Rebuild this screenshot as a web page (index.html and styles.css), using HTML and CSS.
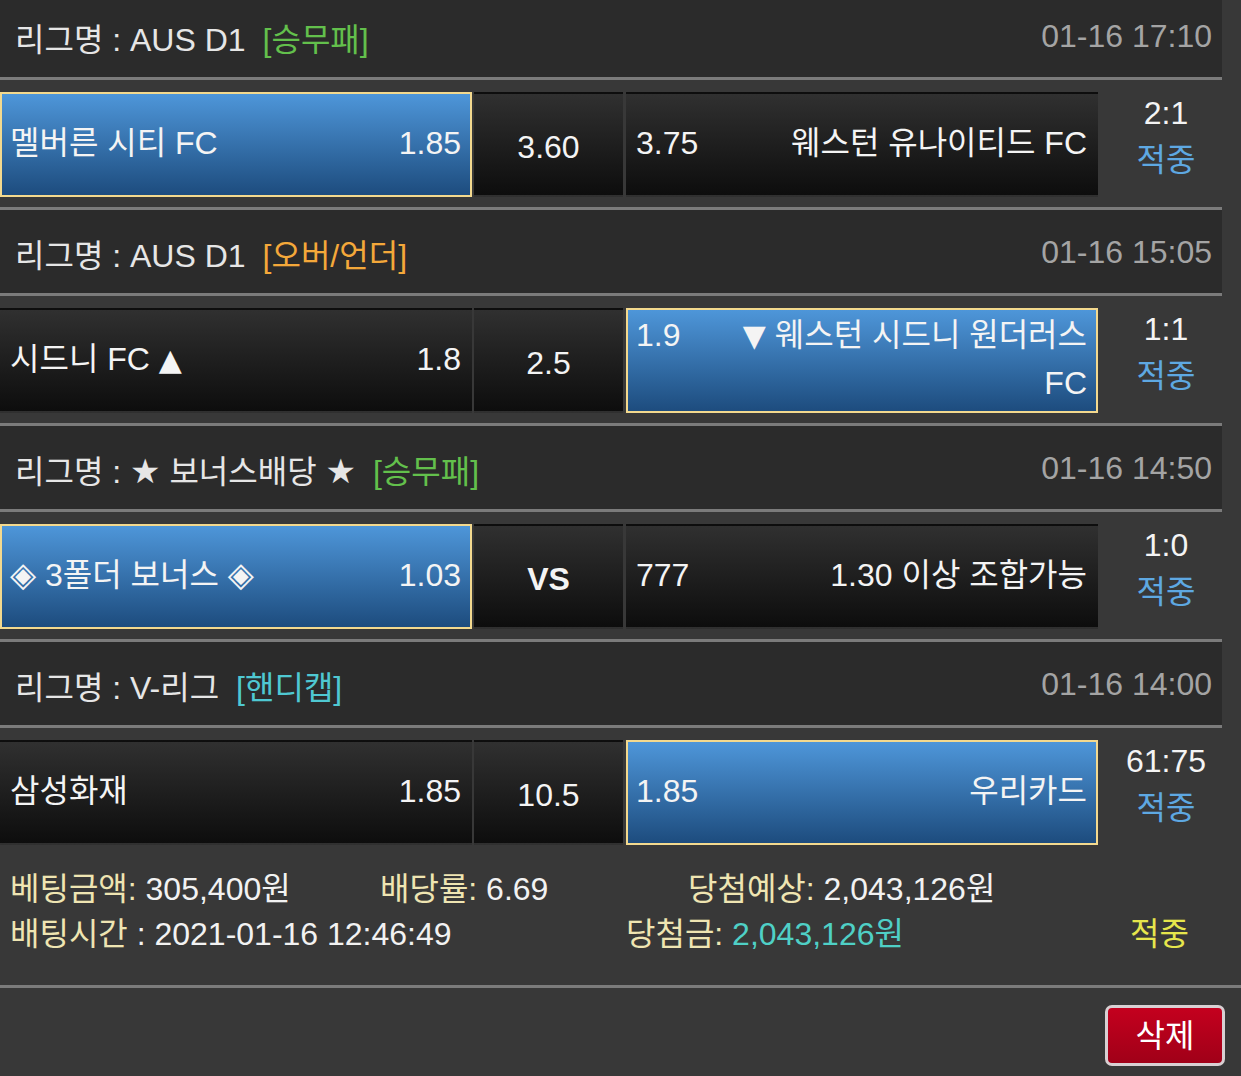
FILE: index.html
```html
<!DOCTYPE html>
<html lang="ko">
<head>
<meta charset="utf-8">
<title>베팅내역</title>
<link rel="stylesheet" href="styles.css">
</head>
<body>
<div class="slip">
  <div class="game">
    <div class="game-head">
      <span class="league">리그명 : AUS D1<span class="tag tag-win">[승무패]</span></span>
      <span class="time">01-16 17:10</span>
    </div>
    <div class="game-body">
      <div class="pick home sel"><span class="team">멜버른 시티 FC</span><span class="odd">1.85</span></div>
      <div class="pick draw">3.60</div>
      <div class="pick away"><div class="away-in"><span class="odd">3.75</span><span class="team">웨스턴 유나이티드 FC</span></div></div>
      <div class="result"><span class="score">2:1</span><span class="hit">적중</span></div>
    </div>
  </div>
  <div class="game">
    <div class="game-head">
      <span class="league">리그명 : AUS D1<span class="tag tag-ou">[오버/언더]</span></span>
      <span class="time">01-16 15:05</span>
    </div>
    <div class="game-body">
      <div class="pick home"><span class="team">시드니 FC <span class="sym tri">▲</span></span><span class="odd">1.8</span></div>
      <div class="pick draw">2.5</div>
      <div class="pick away sel"><div class="away-in"><span class="odd">1.9</span><span class="team"><span class="sym tri">▼</span> 웨스턴 시드니 원더러스 FC</span></div></div>
      <div class="result"><span class="score">1:1</span><span class="hit">적중</span></div>
    </div>
  </div>
  <div class="game">
    <div class="game-head">
      <span class="league">리그명 : <span class="sym">★</span> 보너스배당 <span class="sym">★</span><span class="tag tag-win">[승무패]</span></span>
      <span class="time">01-16 14:50</span>
    </div>
    <div class="game-body">
      <div class="pick home sel"><span class="team"><span class="sym">◈</span> 3폴더 보너스 <span class="sym">◈</span></span><span class="odd">1.03</span></div>
      <div class="pick draw vs">VS</div>
      <div class="pick away"><div class="away-in"><span class="odd">777</span><span class="team">1.30 이상 조합가능</span></div></div>
      <div class="result"><span class="score">1:0</span><span class="hit">적중</span></div>
    </div>
  </div>
  <div class="game">
    <div class="game-head">
      <span class="league">리그명 : V-리그<span class="tag tag-hc">[핸디캡]</span></span>
      <span class="time">01-16 14:00</span>
    </div>
    <div class="game-body">
      <div class="pick home"><span class="team">삼성화재</span><span class="odd">1.85</span></div>
      <div class="pick draw">10.5</div>
      <div class="pick away sel"><div class="away-in"><span class="odd">1.85</span><span class="team">우리카드</span></div></div>
      <div class="result"><span class="score">61:75</span><span class="hit">적중</span></div>
    </div>
  </div>
</div>
<div class="summary">
  <div class="sum-row">
    <span class="c1a"><span class="label">베팅금액:</span> 305,400원</span>
    <span class="c2a"><span class="label">배당률:</span> 6.69</span>
    <span><span class="label">당첨예상:</span> 2,043,126원</span>
  </div>
  <div class="sum-row">
    <span class="c1b"><span class="label">배팅시간</span> : 2021-01-16 12:46:49</span>
    <span class="c2b"><span class="label">당첨금:</span> <span class="win-amt">2,043,126원</span></span>
    <span class="hit-yellow">적중</span>
  </div>
</div>
<div class="actions">
  <button class="btn-del" type="button">삭제</button>
</div>
</body>
</html>
```
FILE: styles.css
```css
html, body {
  margin: 0;
  padding: 0;
}
body {
  background: #383838;
  font-family: "Liberation Sans", "Noto Sans CJK KR", sans-serif;
  font-size: 32px;
  color: #f2f2f2;
  overflow: hidden;
}
.sym {
  font-family: "DejaVu Sans", sans-serif;
  font-size: 34px;
  line-height: 1;
}
.sym.tri {
  font-size: 30px;
}
.slip {
  margin-top: -6px;
  width: 1222px;
}
.game-head {
  box-sizing: border-box;
  height: 86px;
  padding: 2px 10px 0 15px;
  background: #2b2b2b;
  border-bottom: 3px solid #7b7b7b;
  display: flex;
  align-items: center;
  justify-content: space-between;
}
.league {
  color: #e6e6e6;
}
.tag {
  margin-left: 17px;
}
.tag-win { color: #63c04c; }
.tag-ou { color: #f4a83a; }
.tag-hc { color: #4fc8d2; }
.time {
  color: #a4a4a4;
}
.game-body {
  display: flex;
  padding: 12px 0 10px;
  border-bottom: 3px solid #7b7b7b;
}
.game:last-child .game-body {
  border-bottom: none;
  padding-bottom: 0;
}
.pick {
  height: 105px;
  box-sizing: border-box;
  border: 2px solid transparent;
  background: linear-gradient(#303030, #0d0d0d);
  display: flex;
  align-items: center;
  padding: 0 9px 4px 8px;
  line-height: 48px;
  color: #f4f4f4;
}
.home {
  width: 472px;
  justify-content: space-between;
  margin-right: 2px;
}
.draw {
  width: 149px;
  justify-content: center;
  margin-right: 3px;
  padding: 4px 0 0;
}
.vs {
  font-weight: bold;
}
.away {
  width: 472px;
}
.away-in {
  width: 100%;
  display: flex;
  align-items: flex-start;
  justify-content: space-between;
}
.away-in .odd {
  flex: none;
  margin-right: 40px;
}
.away-in .team {
  text-align: right;
}
.sel {
  background: linear-gradient(#4e96d9, #1d4c7e);
  border-color: #f3d98e;
}
.result {
  width: 124px;
  box-sizing: border-box;
  padding-left: 12px;
  margin-top: -2px;
  display: flex;
  flex-direction: column;
  align-items: center;
  line-height: 47px;
}
.score {
  color: #f4f4f4;
}
.hit {
  color: #5ea8e2;
}
.summary {
  padding: 22px 0 28px 10px;
  border-bottom: 3px solid #7b7b7b;
  line-height: 45px;
}
.sum-row {
  display: flex;
  white-space: nowrap;
}
.c1a { width: 370px; }
.c2a { width: 308px; }
.c1b { width: 616px; }
.c2b { width: 504px; }
.label {
  color: #efe5b2;
}
.win-amt {
  color: #4fd0c6;
}
.hit-yellow {
  color: #e6e64c;
}
.actions {
  display: flex;
  justify-content: flex-end;
  padding: 17px 16px 0 0;
}
.btn-del {
  width: 120px;
  height: 61px;
  box-sizing: border-box;
  border: 3px solid #d8d0d3;
  border-radius: 7px;
  background: linear-gradient(#c4001e, #a00018);
  color: #ffffff;
  font-family: "Liberation Sans", "Noto Sans CJK KR", sans-serif;
  font-size: 32px;
  padding: 0;
  line-height: 1;
}
```
